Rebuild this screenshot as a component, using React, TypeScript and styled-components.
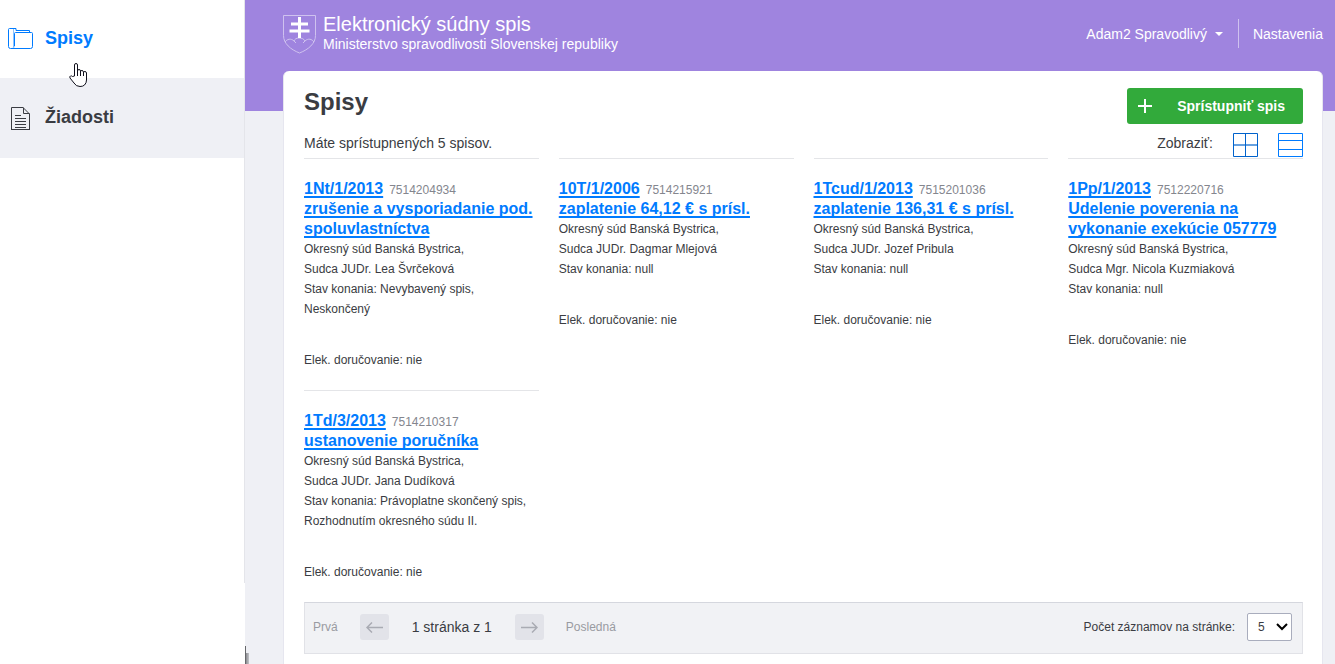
import React from "react";
import styled, { createGlobalStyle } from "styled-components";

const GlobalStyle = createGlobalStyle`
  *, *::before, *::after { box-sizing: border-box; }
  body {
    margin: 0;
    font-family: "Liberation Sans", Arial, sans-serif;
    font-size: 14px;
    line-height: 20px;
    color: #3a3c42;
    background: #fff;
  }
  h1, h2, p { margin: 0; }
  a { color: inherit; text-decoration: none; }
  button, select { font: inherit; }
`;

const Shell = styled.div`
  display: flex;
  min-height: 100vh;
`;

const Sidebar = styled.aside`
  position: relative;
  flex: 0 0 245px;
  background: #fff;
`;

const Nav = styled.nav`
  min-height: 583px;
  border-right: 1px solid #e4e5ea;
`;

const NavLink = styled.a<{ $active?: boolean }>`
  display: flex;
  align-items: center;
  gap: 11px;
  height: ${(p) => (p.$active ? 78 : 80)}px;
  padding: 0 0 2px 8px;
  font-size: 18px;
  font-weight: bold;
  color: ${(p) => (p.$active ? "#007bff" : "#3a3c42")};
  background: ${(p) => (p.$active ? "#fff" : "#eff0f5")};
`;

const Pointer = styled.svg`
  position: absolute;
  left: 69px;
  top: 62px;
`;

const ResizeMark = styled.span`
  position: absolute;
  left: 245px;
  bottom: 0;
  width: 4px;
  height: 11px;
  background: linear-gradient(90deg, #77787c, #c4c5ca);

  &::before {
    content: "";
    position: absolute;
    left: 0;
    bottom: 0;
    width: 1px;
    height: 18px;
    background: #66676b;
  }
`;

const Main = styled.main`
  flex: 1;
  min-width: 0;
  display: flex;
  flex-direction: column;
  padding: 0 12px 0 38px;
  background: linear-gradient(#9f84df 111px, #eff0f5 111px);
`;

const Header = styled.header`
  display: flex;
  justify-content: space-between;
  height: 71px;
  color: #fff;
`;

const Brand = styled.a`
  display: flex;
  gap: 7px;
  padding-top: 14px;
`;

const BrandName = styled.span`
  display: block;
  font-size: 20px;
  line-height: 20px;
`;

const BrandOwner = styled.span`
  display: block;
  line-height: 20px;
`;

const UserMenu = styled.div`
  display: flex;
  align-items: center;
  height: 29px;
  margin-top: 19px;
`;

const UserButton = styled.button`
  display: flex;
  align-items: center;
  gap: 8px;
  padding: 0 15px 0 0;
  border: 0;
  background: none;
  color: #fff;
`;

const SettingsLink = styled.a`
  padding: 5px 0 4px 14px;
  border-left: 1px solid #cfc2ef;
`;

const Panel = styled.section`
  flex: 1;
  padding: 17px 19px 10px 20px;
  border: 1px solid #e6e6ef;
  border-width: 0 1px;
  border-radius: 6px 6px 0 0;
  background: #fff;
`;

const TitleRow = styled.div`
  display: flex;
  justify-content: space-between;
  height: 36px;
`;

const Title = styled.h1`
  font-size: 24px;
  line-height: 28px;
`;

const AddButton = styled.button`
  display: flex;
  align-items: center;
  gap: 25px;
  padding: 0 18px 0 11px;
  border: 0;
  border-radius: 3px;
  background: #32aa3b;
  color: #fff;
  font-weight: bold;
`;

const Summary = styled.div`
  display: flex;
  justify-content: space-between;
  align-items: flex-start;
  height: 34px;
  padding-top: 9px;
`;

const ViewSwitch = styled.div`
  display: flex;
  align-items: flex-start;
  gap: 20px;
`;

const ViewButton = styled.button`
  display: flex;
  padding: 0;
  border: 0;
  background: none;
`;

const CardGrid = styled.div`
  display: grid;
  grid-template-columns: repeat(4, 1fr);
  column-gap: 20px;
  align-items: start;
`;

const Card = styled.article`
  padding: 20px 0;
  border-top: 1px solid #e4e5e8;
  font-size: 12px;
`;

const CardTitle = styled.h2`
  font-size: 16px;
  line-height: 20px;
`;

const CardLink = styled.a`
  color: #007bff;
  text-decoration: underline 2px;
  text-decoration-skip-ink: none;
  text-underline-offset: 2px;
`;

const CardNumber = styled.span`
  margin-left: 6px;
  font-size: 12px;
  line-height: 12px;
  font-weight: normal;
  color: #84868e;
`;

const Delivery = styled.p`
  margin-top: 31px;
`;

const Pager = styled.div`
  display: flex;
  align-items: center;
  justify-content: space-between;
  height: 52px;
  padding: 0 10px 2px 8px;
  border: 1px solid #e1e2e7;
  border-top-color: #d5d7de;
  background: #f1f2f5;
`;

const PagerGroup = styled.div<{ $gap: number }>`
  display: flex;
  align-items: center;
  gap: ${(p) => p.$gap}px;
`;

const PagerText = styled.button`
  padding: 0;
  border: 0;
  background: none;
  font-size: 12px;
  color: #999ba1;
`;

const PagerStatus = styled.span`
  padding: 0 1px;
`;

const PagerArrow = styled.button`
  display: flex;
  align-items: center;
  justify-content: center;
  width: 29px;
  height: 26px;
  padding: 0;
  border: 0;
  border-radius: 3px;
  background: #e2e3e9;
`;

const SizeLabel = styled.label`
  font-size: 12px;
`;

const SelectBox = styled.span`
  position: relative;
  display: flex;

  svg {
    position: absolute;
    right: 4px;
    top: 10px;
    pointer-events: none;
  }
`;

const SizeSelect = styled.select`
  appearance: none;
  width: 45px;
  height: 28px;
  padding: 0 18px 0 10px;
  border: 1px solid #a9adbd;
  border-radius: 2px;
  background: #fff;
  color: #3a3c42;
  font-size: 12px;
`;

type Case = { ref: string; number: string; title: string; lines: string[] };

const COURT = "Okresný súd Banská Bystrica,";

const cases: Case[] = [
  {
    ref: "1Nt/1/2013",
    number: "7514204934",
    title: "zrušenie a vysporiadanie pod. spoluvlastníctva",
    lines: [COURT, "Sudca JUDr. Lea Švrčeková", "Stav konania: Nevybavený spis,", "Neskončený"],
  },
  {
    ref: "10T/1/2006",
    number: "7514215921",
    title: "zaplatenie 64,12 € s prísl.",
    lines: [COURT, "Sudca JUDr. Dagmar Mlejová", "Stav konania: null"],
  },
  {
    ref: "1Tcud/1/2013",
    number: "7515201036",
    title: "zaplatenie 136,31 € s prísl.",
    lines: [COURT, "Sudca JUDr. Jozef Pribula", "Stav konania: null"],
  },
  {
    ref: "1Pp/1/2013",
    number: "7512220716",
    title: "Udelenie poverenia na vykonanie exekúcie 057779",
    lines: [COURT, "Sudca Mgr. Nicola Kuzmiaková", "Stav konania: null"],
  },
  {
    ref: "1Td/3/2013",
    number: "7514210317",
    title: "ustanovenie poručníka",
    lines: [COURT, "Sudca JUDr. Jana Dudíková", "Stav konania: Právoplatne skončený spis,", "Rozhodnutím okresného súdu II."],
  },
];

const FolderIcon = () => (
  <svg width="26" height="26" viewBox="0 0 26 26" fill="none" stroke="#007bff" aria-hidden="true">
    <path d="M.5 21.500V4.500q0-1 1-1h6.500v2h13.500v2" />
    <path d="M6.500 21V8.500q0-1 1-1h16q1 0 1 1v13q0 2-2 2H2.500q-2 0-2-2" />
    <path d="M6.500 20.500q0 3-2.500 3M5.500 4v18" strokeOpacity=".45" />
  </svg>
);

const DocumentIcon = () => (
  <svg width="26" height="26" viewBox="0 0 26 26" fill="none" stroke="#3a3c42" aria-hidden="true">
    <path d="M3.500 3.500H15l6.500 6.500v16h-18zM15.500 3.500V9.500h6M7 11.500h6M7 14.500h11M7 17.500h11M7 20.500h11M7 23.500h11" />
    <path d="M3 25.500h19" />
  </svg>
);

const Crest = () => (
  <svg width="33" height="40" viewBox="0 0 33 40" fill="none" aria-hidden="true">
    <path
      d="M.5 1.500h32v20c0 8-7 14-16 17.500C7.500 35.500.5 29.500.5 21.500z"
      stroke="#cfc2ef"
    />
    <path
      d="M2 28c2-3 6-4 9-1 1-2 2-3 5-3s5 1 6 3c3-3 7-2 9 1M11 27l2 2M22 27l-2 2"
      stroke="#cfc2ef"
    />
    <path d="M16.500 3v21M8 10h17M6.500 17h20" stroke="#fff" strokeWidth="3" />
  </svg>
);

const Arrow = ({ flip }: { flip?: boolean }) => (
  <svg width="17" height="11" viewBox="0 0 17 11" fill="none" stroke="#a9abb3" strokeWidth="1.500" aria-hidden="true">
    <path d={flip ? "M0 5.500h16M11 .5l5 5-5 5" : "M17 5.500H1M6 .5l-5 5 5 5"} />
  </svg>
);

export default function App() {
  return (
    <>
      <GlobalStyle />
      <Shell>
        <Sidebar>
          <Nav>
            <NavLink href="#spisy" $active>
              <FolderIcon />
              Spisy
            </NavLink>
            <NavLink href="#ziadosti">
              <DocumentIcon />
              Žiadosti
            </NavLink>
          </Nav>
          <Pointer width="19" height="26" viewBox="0 0 19 26" aria-hidden="true">
            <path
              d="M5.500 14V3q0-1.500 1.500-1.500T8.500 3v6q0-1.500 1.500-1.500T11.500 9v.5q.3-1 1.500-1t1.500 1.500v.5q.3-1 1.500-1t1.500 1.500v7q0 3-2 5-1.500 1.500-4.500 1.500-4 0-6-3.500L1 16q-.7-1.500.5-2 1-.5 2 .5z"
              fill="#fff"
              stroke="#10101c"
            />
            <path d="M8.500 8v6M11.500 9v5M14.500 10v4" stroke="#10101c" />
          </Pointer>
          <ResizeMark />
        </Sidebar>
        <Main>
          <Header>
            <Brand href="#">
              <Crest />
              <span>
                <BrandName>Elektronický súdny spis</BrandName>
                <BrandOwner>Ministerstvo spravodlivosti Slovenskej republiky</BrandOwner>
              </span>
            </Brand>
            <UserMenu>
              <UserButton type="button">
                Adam2 Spravodlivý
                <svg width="8" height="4" viewBox="0 0 8 4" aria-hidden="true">
                  <path d="M0 0h8L4 4z" fill="#fff" />
                </svg>
              </UserButton>
              <SettingsLink href="#nastavenia">Nastavenia</SettingsLink>
            </UserMenu>
          </Header>
          <Panel>
            <TitleRow>
              <Title>Spisy</Title>
              <AddButton type="button">
                <svg width="14" height="14" viewBox="0 0 14 14" stroke="#fff" strokeWidth="2" aria-hidden="true">
                  <path d="M7 0v14M0 7h14" />
                </svg>
                Sprístupniť spis
              </AddButton>
            </TitleRow>
            <Summary>
              <p>Máte sprístupnených 5 spisov.</p>
              <ViewSwitch>
                <span>Zobraziť:</span>
                <ViewButton type="button" aria-label="Mriežka">
                  <svg width="25" height="24" viewBox="0 0 25 24" fill="none" stroke="#0062cc" aria-hidden="true">
                    <path d="M.5.5h24v23H.5zM12.500 0v24" />
                    <path d="M1 12h23" strokeWidth="2" strokeOpacity=".6" />
                  </svg>
                </ViewButton>
                <ViewButton type="button" aria-label="Zoznam">
                  <svg width="25" height="24" viewBox="0 0 25 24" fill="none" stroke="#007bff" aria-hidden="true">
                    <path d="M.5.5h24v23H.5zM0 7.500h25M0 16.500h25" />
                  </svg>
                </ViewButton>
              </ViewSwitch>
            </Summary>
            <CardGrid>
              {cases.map((c) => (
                <Card key={c.number}>
                  <CardTitle>
                    <CardLink href={`#${c.number}`}>{c.ref}</CardLink>
                    <CardNumber>{c.number}</CardNumber>
                    <br />
                    <CardLink href={`#${c.number}`}>{c.title}</CardLink>
                  </CardTitle>
                  {c.lines.map((line) => (
                    <p key={line}>{line}</p>
                  ))}
                  <Delivery>Elek. doručovanie: nie</Delivery>
                </Card>
              ))}
            </CardGrid>
            <Pager>
              <PagerGroup $gap={22}>
                <PagerText type="button">Prvá</PagerText>
                <PagerArrow type="button" aria-label="Predchádzajúca">
                  <Arrow />
                </PagerArrow>
                <PagerStatus>1 stránka z 1</PagerStatus>
                <PagerArrow type="button" aria-label="Nasledujúca">
                  <Arrow flip />
                </PagerArrow>
                <PagerText type="button">Posledná</PagerText>
              </PagerGroup>
              <PagerGroup $gap={12}>
                <SizeLabel htmlFor="page-size">Počet záznamov na stránke:</SizeLabel>
                <SelectBox>
                  <SizeSelect id="page-size" defaultValue="5">
                    <option>5</option>
                    <option>10</option>
                    <option>20</option>
                  </SizeSelect>
                  <svg width="12" height="8" viewBox="0 0 12 8" fill="none" stroke="#000" strokeWidth="2" aria-hidden="true">
                    <path d="M1 1l5 5 5-5" />
                  </svg>
                </SelectBox>
              </PagerGroup>
            </Pager>
          </Panel>
        </Main>
      </Shell>
    </>
  );
}
